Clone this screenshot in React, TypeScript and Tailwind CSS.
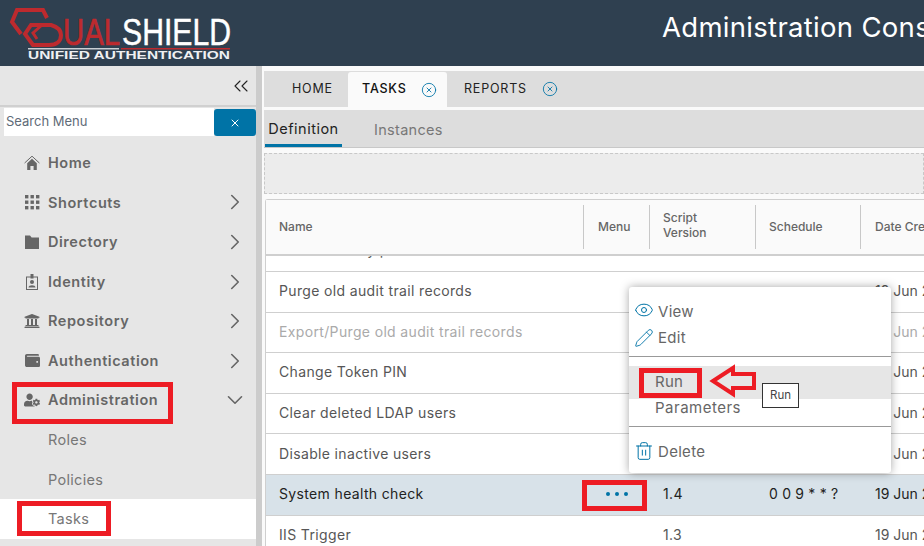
import React from 'react';
import { ChevronRight, ChevronDown, ChevronsLeft, X, CircleX, Eye, Pencil, Trash2 } from 'lucide-react';
import { FaUniversity, FaUserCog, FaWallet } from 'react-icons/fa';

const HomeIcon = () => (
  <svg width="16" height="16" viewBox="0 0 16 16" className="text-[#666]">
    <path d="M.6 8 L8 1.2 L15.4 8" fill="none" stroke="currentColor" strokeWidth="1" />
    <path d="M3.2 8.2 L8 3.8 L12.8 8.2 V15 H9.6 V11 H6.4 V15 H3.2 Z" fill="currentColor" />
  </svg>
);

const GridIcon = () => (
  <svg width="16" height="16" viewBox="0 0 16 16" fill="#666">
    {[1, 6.5, 12].map((y) => [1, 6.5, 12].map((x) => <rect key={`${x}-${y}`} x={x} y={y} width="3.4" height="3.4" />))}
  </svg>
);

const FolderIcon = () => (
  <svg width="16" height="16" viewBox="0 0 16 16" fill="#666">
    <path d="M1 1.5 H6 L7.6 3.4 H15 V15 H1 Z" />
  </svg>
);

const BadgeIcon = () => (
  <svg width="16" height="16" viewBox="0 0 16 16" className="text-[#666]">
    <rect x="2.5" y="3" width="11" height="12.5" fill="none" stroke="currentColor" strokeWidth="1" />
    <rect x="6.5" y="0" width="3" height="4.5" fill="currentColor" />
    <circle cx="8" cy="8" r="2" fill="currentColor" />
    <path d="M4.5 13.5 C4.5 10.5 11.5 10.5 11.5 13.5 Z" fill="currentColor" />
  </svg>
);

const navItems = [
  { label: 'Home', icon: <HomeIcon />, arrow: false },
  { label: 'Shortcuts', icon: <GridIcon />, arrow: true },
  { label: 'Directory', icon: <FolderIcon />, arrow: true },
  { label: 'Identity', icon: <BadgeIcon />, arrow: true },
  { label: 'Repository', icon: <FaUniversity size={16} className="text-[#666]" />, arrow: true },
  { label: 'Authentication', icon: <FaWallet size={15} className="text-[#666]" />, arrow: true },
];

const rows = [
  { name: 'Purge old audit trail records', version: '', schedule: '', date: '19 Jun 2021' },
  { name: 'Export/Purge old audit trail records', version: '', schedule: '', date: '19 Jun 2021', muted: true },
  { name: 'Change Token PIN', version: '', schedule: '', date: '19 Jun 2021' },
  { name: 'Clear deleted LDAP users', version: '', schedule: '', date: '19 Jun 2021' },
  { name: 'Disable inactive users', version: '', schedule: '', date: '19 Jun 2021' },
  { name: 'System health check', version: '1.4', schedule: '0 0 9 * * ?', date: '19 Jun 2021', active: true },
  { name: 'IIS Trigger', version: '1.3', schedule: '', date: '19 Jun 2021' },
];

const COLS = 'grid grid-cols-[317px_66px_106px_105px_200px]';
const FONT = "font-['Inter','Noto_Sans',sans-serif]";

function Logo() {
  const logoFont = "'Liberation Sans', sans-serif";
  return (
    <svg width="240" height="66" viewBox="0 0 240 66" className="shrink-0">
      <path d="M47 18 L43 10 H17 L12 22 L21 34" fill="none" stroke="#bd2a2e" strokeWidth="4" />
      <path d="M33 45 L25 34 L31 25 H51 C58 27 61 31 61 35 C61 41 57 45 49 45 Z" fill="none" stroke="#bd2a2e" strokeWidth="4" />
      <path d="M42 25 L33 33 L37 39" fill="none" stroke="#bd2a2e" strokeWidth="3" />
      <text x="63" y="45" textLength="57" lengthAdjust="spacingAndGlyphs" fontFamily={logoFont} fontSize="37" fill="#bd2a2e" stroke="#bd2a2e" strokeWidth="0.7">UAL</text>
      <text x="122" y="45" textLength="109" lengthAdjust="spacingAndGlyphs" fontFamily={logoFont} fontSize="37" fill="#fff" stroke="#fff" strokeWidth="0.5">SHIELD</text>
      <rect x="28" y="48" width="91" height="1.5" fill="#c9ced3" />
      <rect x="121" y="48" width="109" height="1.5" fill="#bd2a2e" />
      <text x="28" y="58.5" textLength="202" lengthAdjust="spacingAndGlyphs" fontFamily={logoFont} fontSize="10.5" fontWeight="700" fill="#eef0f2">UNIFIED AUTHENTICATION</text>
    </svg>
  );
}

function Sidebar() {
  return (
    <aside className="w-[264px] shrink-0 flex border-r-[2px] border-[#fafafa]">
      <div className="w-[256px] bg-[#e6e6e6] flex flex-col">
        <div className="h-[41px] flex items-center justify-end pr-[3px] border-b-2 border-[#d0d0d0]">
          <ChevronsLeft size={24} strokeWidth={1.1} className="text-[#222]" />
        </div>
        <div className="flex h-[28px] mt-[1px] pl-[4px]">
          <div className="flex-1 bg-white flex items-center pl-[2px] text-[13px] text-[#5f6b78]">Search Menu</div>
          <div className="w-[42px] mt-[1px] bg-[#0073a6] rounded-[3px] flex items-center justify-center">
            <X size={12} className="text-white" />
          </div>
        </div>
        <nav className="mt-[7px] flex flex-col">
          {navItems.map((item) => (
            <div key={item.label} className="h-[39.6px] flex items-center pl-[24px] pr-[8px]">
              <span className="w-[16px] flex justify-center">{item.icon}</span>
              <span className="ml-[8px] text-[14.5px] font-semibold tracking-[0.55px] text-[#666]">{item.label}</span>
              {item.arrow && <ChevronRight size={26} strokeWidth={1.5} className="ml-auto text-[#666]" />}
            </div>
          ))}
          <div className="h-[39.6px] flex items-center pl-[24px] pr-[8px]">
            <FaUserCog size={16} className="text-[#666] w-[16px]" />
            <span className="ml-[8px] text-[14.5px] font-semibold tracking-[0.55px] text-[#666]">Administration</span>
            <ChevronDown size={26} strokeWidth={1.5} className="ml-auto text-[#666]" />
          </div>
          <div className="h-[39.6px] flex items-center pl-[48px] text-[14.5px] tracking-[0.3px] text-[#777]">Roles</div>
          <div className="h-[39.6px] flex items-center pl-[48px] text-[14.5px] tracking-[0.3px] text-[#777]">Policies</div>
          <div className="h-[40px] flex items-center pl-[48px] text-[14.5px] tracking-[0.3px] text-[#777] bg-white">Tasks</div>
        </nav>
      </div>
      <div className="w-[6px] bg-[#cccccc]" />
    </aside>
  );
}

function Tabs() {
  return (
    <div className="mt-[5px] h-[36px] bg-[#dddddd] flex items-end pl-[28px] text-[12.5px] tracking-[0.8px]">
      <div className="h-full flex items-center w-[56px] text-[#222]">HOME</div>
      <div className="h-[35px] w-[99px] bg-[#fafafa] rounded-t-[3px] flex items-center pl-[14px] font-medium text-[#111]">
        TASKS
        <CircleX size={16} strokeWidth={1.3} className="ml-auto mr-[10px] text-[#0073a6]" />
      </div>
      <div className="h-full flex items-center pl-[17px] text-[#222]">
        REPORTS
        <CircleX size={16} strokeWidth={1.3} className="ml-[15px] text-[#0073a6]" />
      </div>
    </div>
  );
}

function SubTabs() {
  return (
    <div className="mt-[3px] h-[38px] bg-[#dddddd] flex border-b border-[#c8c8c8] text-[14.5px] pl-[1px]">
      <div className="w-[77px] flex items-center justify-center pt-[3px] border-b-[3px] border-[#0073a6] tracking-[0.5px] text-[#222]">Definition</div>
      <div className="ml-[32px] flex items-center pt-[2px] tracking-[0.3px] text-[#777]">Instances</div>
    </div>
  );
}

function TaskTable() {
  const headCell = 'h-[44px] flex items-center border-l border-[#c8c8c8] text-[12px] font-medium text-[#666] leading-[15px]';
  return (
    <div className="mt-[5px] ml-[1px] border-t border-l border-[#cfcfcf] rounded-tl-[3px] bg-white">
      <div className={`${COLS} h-[56px] items-center bg-[#fafafa] border-b-2 border-[#cfcfcf]`}>
        <div className="pl-[13px] text-[12px] font-medium text-[#666]">Name</div>
        <div className={`${headCell} pl-[14px] pb-[2px]`}>Menu</div>
        <div className={`${headCell} pl-[13px] pb-[4px]`}>Script<br />Version</div>
        <div className={`${headCell} pl-[13px] pb-[2px]`}>Schedule</div>
        <div className={`${headCell} pl-[14px] pb-[2px] whitespace-nowrap`}>Date Created</div>
      </div>
      <div className="h-[16px] overflow-hidden border-b border-[#cfcfcf] pl-[13px]">
        <div className="text-[14px] leading-[20px] -translate-y-[16px] tracking-[0.35px] text-[#565656]">Delete history plan</div>
      </div>
      {rows.map((r) => (
        <div key={r.name} className={`${COLS} h-[40.6px] pb-[2px] items-center border-b border-[#cfcfcf] text-[14px] tracking-[0.35px] ${r.active ? 'bg-[#d8e2e9]' : ''} ${r.muted ? 'text-[#aaaaaa]' : r.active ? 'text-[#222]' : 'text-[#565656]'}`}>
          <div className="pl-[13px]">{r.name}</div>
          <div className="flex justify-center gap-[5px] pl-[2px]">
            {r.active && [0, 1, 2].map((i) => <span key={i} className="w-[4px] h-[4px] rounded-full bg-[#0073a6]" />)}
          </div>
          <div className="pl-[14px]">{r.version}</div>
          <div className="pl-[14px] tracking-[0.2px]">{r.schedule}</div>
          <div className="pl-[15px] tracking-normal whitespace-nowrap">{r.date}</div>
        </div>
      ))}
    </div>
  );
}

function PopupMenu() {
  return (
    <div className="absolute left-[629px] top-[287px] w-[262px] h-[186px] bg-white rounded-[3px] shadow-[0_0_10px_rgba(0,0,0,0.35)] text-[15px] tracking-[0.3px] text-[#666]">
      <div className="pt-[12px] pl-[5px] flex flex-col">
        <div className="h-[26px] flex items-center gap-[4px]">
          <Eye size={20} strokeWidth={1.2} className="text-[#0073a6] -mt-[4px]" />View
        </div>
        <div className="h-[26px] flex items-center gap-[4px]">
          <Pencil size={20} strokeWidth={1.1} className="text-[#0073a6]" />Edit
        </div>
      </div>
      <div className="mt-[5px] border-t border-[#999]" />
      <div className="mt-[9px] h-[33px] bg-[#e6e6e6] flex items-center pl-[26px]">Run</div>
      <div className="h-[18px] flex items-center pl-[26px] tracking-[0.5px]">Parameters</div>
      <div className="mt-[9px] border-t border-[#999]" />
      <div className="mt-[14px] flex items-center gap-[4px] pl-[5px]">
        <Trash2 size={20} strokeWidth={1.2} className="text-[#0073a6] -mt-[3px]" />Delete
      </div>
    </div>
  );
}

export default function App() {
  return (
    <div className={`relative w-[924px] h-[546px] overflow-hidden bg-white ${FONT}`}>
      <header className="h-[66px] bg-[#2f4050] flex items-center overflow-hidden">
        <Logo />
        <h1 className="ml-[422px] -mt-[10px] text-[27.5px] text-white whitespace-nowrap tracking-[0.3px]">Administration Console</h1>
      </header>
      <div className="flex h-[480px]">
        <Sidebar />
        <main className="flex-1 min-w-0 bg-[#fafafa] overflow-hidden">
          <Tabs />
          <SubTabs />
          <div className="mt-[5px] h-[41px] bg-[#ececec] border border-dashed border-[#c8c8c8]" />
          <TaskTable />
        </main>
      </div>

      <PopupMenu />

      {/* tooltip */}
      <div className="absolute left-[762px] top-[383px] w-[37px] h-[25px] bg-white border border-[#333] flex items-center justify-center text-[11.5px] text-[#444]">Run</div>

      {/* red annotations on the screenshot */}
      <div className="absolute left-[12px] top-[382px] w-[161px] h-[42px] border-[5px] border-[#ed1c24]" />
      <div className="absolute left-[17px] top-[501px] w-[94px] h-[35px] border-[5px] border-[#ed1c24]" />
      <div className="absolute left-[639px] top-[368px] w-[63px] h-[30px] border-[5px] border-[#ed1c24]" />
      <div className="absolute left-[582px] top-[480px] w-[65px] h-[31px] border-[5px] border-[#ed1c24]" />
      <svg className="absolute left-[708px] top-[364px]" width="50" height="35" viewBox="0 0 50 35">
        <path d="M5 17 L25 4 V10 H46 V24 H25 V30 Z" fill="none" stroke="#ed1c24" strokeWidth="4" />
      </svg>
    </div>
  );
}
